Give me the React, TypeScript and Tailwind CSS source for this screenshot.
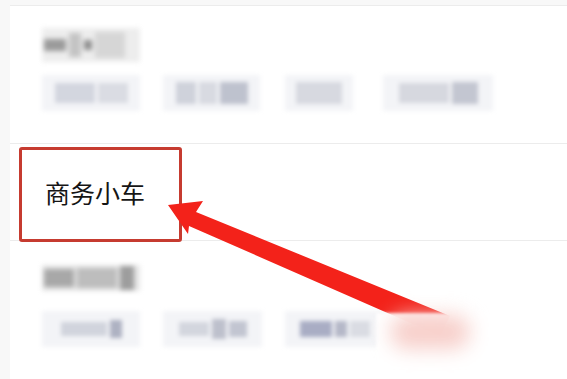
import React from "react";

const Blur = ({ className }: { className: string }) => <div className={className} />;

const Title = ({ blocks }: { blocks: string[] }) => (
  <div className="w-[98px] h-[34px] bg-[#ededed] blur-[2.5px] flex items-center gap-[3px] px-[2px]">
    {blocks.map((c, i) => (
      <Blur key={i} className={c} />
    ))}
  </div>
);

const Chip = ({ w, inner }: { w: string; inner: string[] }) => (
  <div className={`${w} h-[36px] bg-[#f3f4f7] blur-[2px] flex items-center justify-center gap-[3px] px-[10px]`}>
    {inner.map((c, i) => (
      <Blur key={i} className={c} />
    ))}
  </div>
);

const App = () => {
  return (
    <div
      className="relative w-[567px] h-[379px] overflow-hidden bg-[#f8f8f8] pl-[10px] pt-[5px]"
      style={{ fontFamily: '"Noto Sans CJK SC", "Noto Sans", sans-serif' }}
    >
      <div className="h-full bg-white border-t border-[#ececec] flex flex-col">
        <section className="h-[138px] pl-[32px] pt-[22px] flex flex-col gap-[13px] border-b border-[#ececec]">
          <Title
            blocks={[
              "w-[22px] h-[12px] bg-[#9a9a9a]",
              "w-[12px] h-[24px] bg-[#c4c4c4]",
              "w-[8px] h-[10px] bg-[#8d8d8d]",
              "w-[30px] h-[26px] bg-[#d6d6d6]",
            ]}
          />
          <div className="flex">
            <Chip w="w-[98px]" inner={["w-[40px] h-[20px] bg-[#d3d6df]", "w-[30px] h-[20px] bg-[#dadce3]"]} />
            <div className="ml-[23px]">
              <Chip w="w-[97px]" inner={["w-[20px] h-[22px] bg-[#cfd2db]", "w-[18px] h-[22px] bg-[#d8dae1]", "w-[28px] h-[22px] bg-[#bec2ce]"]} />
            </div>
            <div className="ml-[25px]">
              <Chip w="w-[68px]" inner={["w-[46px] h-[22px] bg-[#d7d9e0]"]} />
            </div>
            <div className="ml-[30px]">
              <Chip w="w-[110px]" inner={["w-[50px] h-[20px] bg-[#d6d8df]", "w-[26px] h-[22px] bg-[#c3c6d1]"]} />
            </div>
          </div>
        </section>

        <section className="h-[97px] pl-[35px] flex items-center border-b border-[#ececec]">
          <span className="text-[25px] leading-none text-[#151515]">商务小车</span>
        </section>

        <section className="flex-1 pl-[32px] pt-[24px] flex flex-col gap-[20px]">
          <div className="w-[98px] h-[26px] bg-[#e6e6e6] blur-[2.5px] flex items-center gap-[3px] px-[2px]">
            <div className="w-[30px] h-[18px] bg-[#a8a8a8]" />
            <div className="w-[40px] h-[20px] bg-[#bdbdbd]" />
            <div className="w-[14px] h-[24px] bg-[#9d9d9d]" />
          </div>
          <div className="flex gap-[23px]">
            <Chip w="w-[98px]" inner={["w-[46px] h-[14px] bg-[#d1d4dd]", "w-[12px] h-[18px] bg-[#aeb2c2]"]} />
            <Chip w="w-[99px]" inner={["w-[30px] h-[14px] bg-[#d3d6de]", "w-[14px] h-[20px] bg-[#bdc0cc]", "w-[18px] h-[16px] bg-[#c2c5d1]"]} />
            <Chip w="w-[100px]" inner={["w-[32px] h-[16px] bg-[#a9adc4]", "w-[12px] h-[16px] bg-[#b5b8c8]", "w-[20px] h-[16px] bg-[#dadce3]"]} />
          </div>
        </section>
      </div>

      {/* annotation box */}
      <div className="absolute left-[19px] top-[147px] w-[163px] h-[95px] border-[3px] border-[#c63b30] rounded-[3px]" />

      {/* arrow */}
      <svg className="absolute left-0 top-0" width="567" height="379" viewBox="0 0 567 379">
        <polygon
          points="168,205 203,201 196,212 450,316 440,336 189,226 188,234"
          fill="#f3221a"
        />
      </svg>

      {/* watermark */}
      <div className="absolute left-[376px] top-[313px] w-[134px] h-[57px] bg-white/95 blur-[1.5px]">
        <div className="absolute left-[14px] top-[2px] w-[80px] h-[34px] rounded-full bg-[#f7cfca] blur-[10px]" />
      </div>
    </div>
  );
};

export default App;
